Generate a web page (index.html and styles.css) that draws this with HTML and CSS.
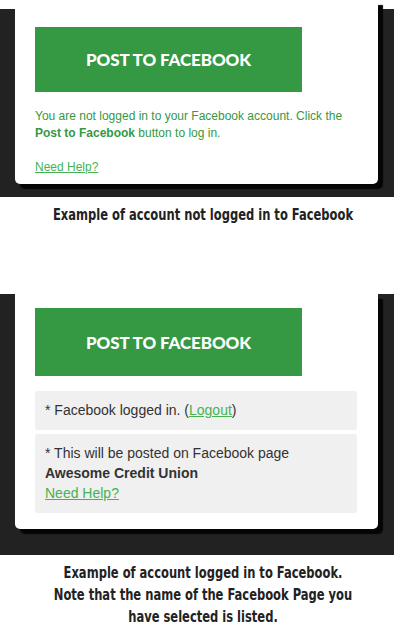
FILE: index.html
```html
<!DOCTYPE html>
<html>
<head>
<meta charset="utf-8">
<link rel="stylesheet" href="styles.css">
</head>
<body>
<div class="shot shot-top">
  <div class="card card-top">
    <div class="fb-button">POST TO FACEBOOK</div>
    <p class="notice">You are not logged in to your Facebook account. Click the <strong>Post to Facebook</strong> button to log in.</p>
    <a class="help help-top" href="#">Need Help?</a>
  </div>
</div>
<div class="caption-wrap caption-wrap-top">
  <p class="caption">Example of account not logged in to Facebook</p>
</div>
<div class="shot shot-bottom">
  <div class="card card-bottom">
    <div class="fb-button fb-button-tall">POST TO FACEBOOK</div>
    <div class="info">* Facebook logged in. (<a class="link" href="#">Logout</a>)</div>
    <div class="info info-page">
      <div>* This will be posted on Facebook page</div>
      <div class="page-name">Awesome Credit Union</div>
      <a class="link" href="#">Need Help?</a>
    </div>
  </div>
</div>
<div class="caption-wrap caption-wrap-bottom">
  <p class="caption">Example of account logged in to Facebook.<br>Note that the name of the Facebook Page you<br>have selected is listed.</p>
</div>
</body>
</html>
```
FILE: styles.css
```css
html, body {
  margin: 0;
  padding: 0;
  background: #ffffff;
}
body {
  width: 394px;
  font-family: "Liberation Sans", Arial, sans-serif;
}
.shot {
  padding: 0 16px 0 15px;
}
.shot-top {
  background: linear-gradient(#ffffff 0, #ffffff 9px, #222222 9px);
  padding-bottom: 13px;
}
.shot-bottom {
  background: #222222;
  padding-bottom: 26px;
}
.card {
  background: #ffffff;
  border-radius: 0 0 5px 5px;
  box-shadow: 5px 5px 1px #050505;
  padding: 0 21px 0 20px;
}
.card-top {
  height: 184px;
  box-sizing: border-box;
  padding-top: 27px;
}
.card-bottom {
  padding-top: 14px;
  padding-bottom: 16px;
}
.fb-button {
  width: 267px;
  height: 65px;
  background: #359843;
  color: #ffffff;
  display: flex;
  align-items: center;
  justify-content: center;
  font-family: Lato, "Open Sans", sans-serif;
  font-weight: 900;
  font-size: 17px;
  letter-spacing: -0.1px;
}
.fb-button-tall {
  height: 68px;
}
.notice {
  margin: 16px 0 17px;
  font-size: 12px;
  line-height: 17px;
  color: #359843;
}
.notice strong {
  font-weight: bold;
}
.help {
  display: block;
  font-size: 12px;
  line-height: 17px;
  color: #45b352;
  text-decoration: underline;
}
.info {
  margin-top: 15px;
  background: #f0f0f0;
  border-radius: 3px;
  padding: 9px 10px 10px;
  font-size: 14px;
  line-height: 20px;
  color: #333333;
}
.info-page {
  margin-top: 4px;
}
.page-name {
  font-weight: bold;
}
.link {
  color: #45b352;
  text-decoration: underline;
}
.caption-wrap {
  padding-left: 12px;
}
.caption-wrap-top {
  padding-top: 7px;
  padding-bottom: 68px;
}
.caption-wrap-bottom {
  padding-top: 7px;
  padding-bottom: 10px;
}
.caption {
  margin: 0;
  text-align: center;
  white-space: nowrap;
  font-family: "DejaVu Sans Condensed", "DejaVu Sans", sans-serif;
  font-stretch: condensed;
  font-weight: bold;
  color: #222222;
  font-size: 16px;
  line-height: 22px;
  transform: scaleX(0.8);
  transform-origin: 50% 50%;
}
```
